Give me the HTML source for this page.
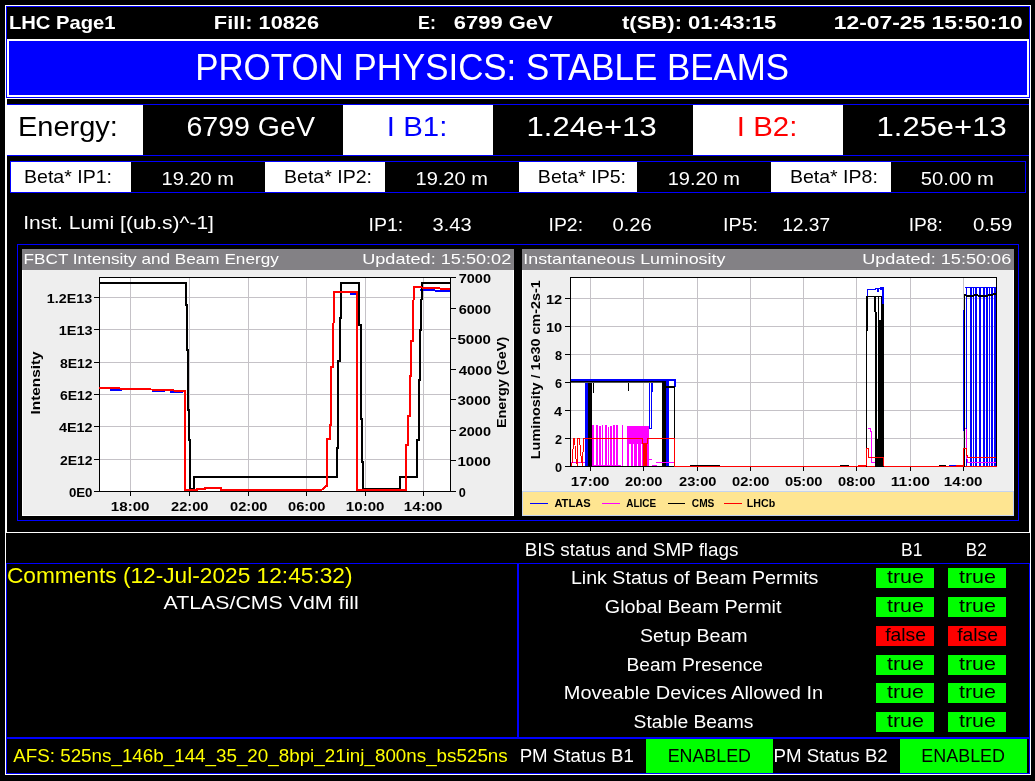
<!DOCTYPE html>
<html><head><meta charset="utf-8"><title>LHC Page1</title>
<style>html,body{margin:0;padding:0;background:#000;overflow:hidden}svg{display:block;will-change:transform}text{font-family:"Liberation Sans",sans-serif}</style>
</head><body>
<svg width="1035" height="781" viewBox="0 0 1035 781">
<rect x="0" y="0" width="1035" height="781" fill="#000"/>
<g shape-rendering="crispEdges">
<rect x="5" y="5" width="1026" height="1" fill="#ffffff"/>
<rect x="5" y="774" width="1026" height="1" fill="#ffffff"/>
<rect x="5" y="5" width="1" height="770" fill="#ffffff"/>
<rect x="1030" y="5" width="1" height="770" fill="#ffffff"/>
<rect x="6" y="6" width="1024" height="1" fill="#0000ff"/>
<rect x="6" y="97" width="1024" height="1" fill="#0000ff"/>
<rect x="6" y="6" width="1" height="92" fill="#0000ff"/>
<rect x="1029" y="6" width="1" height="92" fill="#0000ff"/>
<rect x="5" y="98" width="1026" height="1" fill="#ffffff"/>
<rect x="7" y="39" width="1022" height="58" fill="#ffffff"/>
<rect x="9" y="41" width="1018" height="54" fill="#0000ff"/>
<rect x="6" y="98" width="1" height="435" fill="#ffffff"/>
<rect x="1029" y="98" width="1" height="435" fill="#ffffff"/>
<rect x="7" y="104" width="1022" height="1" fill="#0000ff"/>
<rect x="7" y="155" width="1022" height="1" fill="#0000ff"/>
<rect x="7" y="105" width="136" height="50" fill="#ffffff"/>
<rect x="343" y="105" width="150" height="50" fill="#ffffff"/>
<rect x="693" y="105" width="150" height="50" fill="#ffffff"/>
<rect x="10" y="161" width="1016" height="1" fill="#0000ff"/>
<rect x="10" y="192" width="1016" height="1" fill="#0000ff"/>
<rect x="10" y="161" width="1" height="32" fill="#0000ff"/>
<rect x="1025" y="161" width="1" height="32" fill="#0000ff"/>
<rect x="11" y="162" width="120" height="30" fill="#ffffff"/>
<rect x="265" y="162" width="120" height="30" fill="#ffffff"/>
<rect x="519" y="162" width="118" height="30" fill="#ffffff"/>
<rect x="771" y="162" width="120" height="30" fill="#ffffff"/>
<rect x="17" y="244" width="1002" height="1" fill="#0000ff"/>
<rect x="17" y="520" width="1002" height="1" fill="#0000ff"/>
<rect x="17" y="244" width="1" height="277" fill="#0000ff"/>
<rect x="1018" y="244" width="1" height="277" fill="#0000ff"/>
<rect x="22" y="249" width="492" height="21" fill="#838185"/>
<rect x="22" y="270" width="492" height="246" fill="#ffffff"/>
<rect x="23" y="270" width="490" height="245" fill="#eeeeee"/>
<rect x="522" y="249" width="492" height="21" fill="#838185"/>
<rect x="522" y="270" width="492" height="221" fill="#ffffff"/>
<rect x="523" y="270" width="490" height="221" fill="#eeeeee"/>
<rect x="522" y="491" width="492" height="25" fill="#c4d3ee"/>
<rect x="523" y="492" width="490" height="23" fill="#fee591"/>
<rect x="5" y="532" width="1026" height="1" fill="#ffffff"/>
<rect x="6" y="563" width="1024" height="1" fill="#0000ff"/>
<rect x="6" y="563" width="1" height="211" fill="#0000ff"/>
<rect x="1029" y="563" width="1" height="211" fill="#0000ff"/>
<rect x="6" y="773" width="1024" height="1" fill="#0000ff"/>
<rect x="517" y="563" width="2" height="175" fill="#0000ff"/>
<rect x="6" y="737" width="1024" height="2" fill="#0000ff"/>
<rect x="876" y="568" width="58" height="20" fill="#00ff00"/>
<rect x="948" y="568" width="58" height="20" fill="#00ff00"/>
<rect x="876" y="597" width="58" height="20" fill="#00ff00"/>
<rect x="948" y="597" width="58" height="20" fill="#00ff00"/>
<rect x="876" y="626" width="58" height="20" fill="#ff0000"/>
<rect x="948" y="626" width="58" height="20" fill="#ff0000"/>
<rect x="876" y="655" width="58" height="20" fill="#00ff00"/>
<rect x="948" y="655" width="58" height="20" fill="#00ff00"/>
<rect x="876" y="683" width="58" height="20" fill="#00ff00"/>
<rect x="948" y="683" width="58" height="20" fill="#00ff00"/>
<rect x="876" y="712" width="58" height="20" fill="#00ff00"/>
<rect x="948" y="712" width="58" height="20" fill="#00ff00"/>
<rect x="646" y="739" width="127" height="34" fill="#00ff00"/>
<rect x="900" y="739" width="127" height="34" fill="#00ff00"/>
<rect x="99" y="277" width="352" height="215" fill="#ffffff"/>
<rect x="130" y="278" width="1" height="213" fill="#c5c2c7"/>
<rect x="189" y="278" width="1" height="213" fill="#c5c2c7"/>
<rect x="248" y="278" width="1" height="213" fill="#c5c2c7"/>
<rect x="306" y="278" width="1" height="213" fill="#c5c2c7"/>
<rect x="365" y="278" width="1" height="213" fill="#c5c2c7"/>
<rect x="423" y="278" width="1" height="213" fill="#c5c2c7"/>
<rect x="100" y="297" width="350" height="1" fill="#c5c2c7"/>
<rect x="100" y="329" width="350" height="1" fill="#c5c2c7"/>
<rect x="100" y="362" width="350" height="1" fill="#c5c2c7"/>
<rect x="100" y="394" width="350" height="1" fill="#c5c2c7"/>
<rect x="100" y="426" width="350" height="1" fill="#c5c2c7"/>
<rect x="100" y="459" width="350" height="1" fill="#c5c2c7"/>
<rect x="99" y="277" width="352" height="1" fill="#000"/>
<rect x="99" y="277" width="1" height="215" fill="#000"/>
<rect x="99" y="491" width="352" height="1" fill="#000"/>
<rect x="450" y="277" width="1" height="215" fill="#000"/>
<rect x="94" y="491" width="5" height="1" fill="#000"/>
<rect x="94" y="459" width="5" height="1" fill="#000"/>
<rect x="94" y="426" width="5" height="1" fill="#000"/>
<rect x="94" y="394" width="5" height="1" fill="#000"/>
<rect x="94" y="362" width="5" height="1" fill="#000"/>
<rect x="94" y="329" width="5" height="1" fill="#000"/>
<rect x="94" y="297" width="5" height="1" fill="#000"/>
<rect x="451" y="491" width="5" height="1" fill="#000"/>
<rect x="451" y="460" width="5" height="1" fill="#000"/>
<rect x="451" y="430" width="5" height="1" fill="#000"/>
<rect x="451" y="399" width="5" height="1" fill="#000"/>
<rect x="451" y="369" width="5" height="1" fill="#000"/>
<rect x="451" y="338" width="5" height="1" fill="#000"/>
<rect x="451" y="308" width="5" height="1" fill="#000"/>
<rect x="451" y="277" width="5" height="1" fill="#000"/>
<rect x="130" y="492" width="1" height="4" fill="#000"/>
<rect x="189" y="492" width="1" height="4" fill="#000"/>
<rect x="248" y="492" width="1" height="4" fill="#000"/>
<rect x="306" y="492" width="1" height="4" fill="#000"/>
<rect x="365" y="492" width="1" height="4" fill="#000"/>
<rect x="423" y="492" width="1" height="4" fill="#000"/>
<polyline points="110,390 122,390" fill="none" stroke="#0000ff" stroke-width="2"/>
<polyline points="152,391 165,391" fill="none" stroke="#0000ff" stroke-width="2"/>
<polyline points="170,392 183,392" fill="none" stroke="#0000ff" stroke-width="2"/>
<polyline points="420,290 450,291" fill="none" stroke="#0000ff" stroke-width="2"/>
<polyline points="350,294 356,294" fill="none" stroke="#0000ff" stroke-width="2"/>
<polyline points="99,283 186,283 186,305 187,305 187,350 188,350 188,410 189,410 189,440 190,440 190,489 194,489 194,477 337,477 337,448 338,448 338,361 340,361 340,318 341,318 341,283 359,283 359,325 360.5,325 360.5,419 362,419 362,462 363,462 363,489 400,489 400,477 417,477 417,440 418.5,440 418.5,380 419.5,380 419.5,330 420.5,330 420.5,300 421.5,300 422,283 450,283" fill="none" stroke="#000" stroke-width="2"/>
<polyline points="99,388 140,389 185,391 185,490 197,490 197,489 205,489 205,488 221,488 221,490 321,490 323,489 326,486 327,486 327,439 329.5,439 329.5,425 330.5,425 330.5,367 332.5,367 332.5,324 333.5,324 334,292 357,292 357,490 406,490 406.5,445 408,445 408,416 409.5,416 409.5,376 411,376 411,341 412.5,341 412.5,301 413.5,301 414,287 430,288 450,289" fill="none" stroke="#ff0000" stroke-width="2"/>
<rect x="570" y="277" width="427" height="190" fill="#ffffff"/>
<rect x="590" y="278" width="1" height="188" fill="#c5c2c7"/>
<rect x="643" y="278" width="1" height="188" fill="#c5c2c7"/>
<rect x="697" y="278" width="1" height="188" fill="#c5c2c7"/>
<rect x="750" y="278" width="1" height="188" fill="#c5c2c7"/>
<rect x="803" y="278" width="1" height="188" fill="#c5c2c7"/>
<rect x="856" y="278" width="1" height="188" fill="#c5c2c7"/>
<rect x="910" y="278" width="1" height="188" fill="#c5c2c7"/>
<rect x="963" y="278" width="1" height="188" fill="#c5c2c7"/>
<rect x="571" y="298" width="425" height="1" fill="#c5c2c7"/>
<rect x="571" y="326" width="425" height="1" fill="#c5c2c7"/>
<rect x="571" y="354" width="425" height="1" fill="#c5c2c7"/>
<rect x="571" y="382" width="425" height="1" fill="#c5c2c7"/>
<rect x="571" y="410" width="425" height="1" fill="#c5c2c7"/>
<rect x="571" y="438" width="425" height="1" fill="#c5c2c7"/>
<rect x="570" y="277" width="427" height="1" fill="#000"/>
<rect x="570" y="277" width="1" height="190" fill="#000"/>
<rect x="570" y="466" width="427" height="1" fill="#000"/>
<rect x="996" y="277" width="1" height="190" fill="#000"/>
<rect x="565" y="466" width="5" height="1" fill="#000"/>
<rect x="565" y="438" width="5" height="1" fill="#000"/>
<rect x="565" y="410" width="5" height="1" fill="#000"/>
<rect x="565" y="382" width="5" height="1" fill="#000"/>
<rect x="565" y="354" width="5" height="1" fill="#000"/>
<rect x="565" y="326" width="5" height="1" fill="#000"/>
<rect x="565" y="298" width="5" height="1" fill="#000"/>
<rect x="590" y="467" width="1" height="4" fill="#000"/>
<rect x="643" y="467" width="1" height="4" fill="#000"/>
<rect x="697" y="467" width="1" height="4" fill="#000"/>
<rect x="750" y="467" width="1" height="4" fill="#000"/>
<rect x="803" y="467" width="1" height="4" fill="#000"/>
<rect x="856" y="467" width="1" height="4" fill="#000"/>
<rect x="910" y="467" width="1" height="4" fill="#000"/>
<rect x="963" y="467" width="1" height="4" fill="#000"/>
<rect x="571" y="379" width="91" height="2" fill="#0000ff"/>
<rect x="585" y="381" width="3" height="85" fill="#0000ff"/>
<rect x="649" y="381" width="1" height="48" fill="#0000ff"/>
<rect x="649" y="428" width="3" height="1" fill="#0000ff"/>
<rect x="651" y="381" width="1" height="48" fill="#0000ff"/>
<rect x="651" y="381" width="2" height="11" fill="#0000ff"/>
<rect x="662" y="379" width="14" height="2" fill="#0000ff"/>
<rect x="666" y="381" width="10" height="5" fill="#0000ff"/>
<rect x="669" y="381" width="5" height="5" fill="#ffffff"/>
<rect x="666" y="386" width="3" height="80" fill="#0000ff"/>
<rect x="675" y="381" width="1" height="6" fill="#0000ff"/>
<rect x="571" y="381" width="91" height="1" fill="#000"/>
<rect x="571" y="382" width="91" height="1" fill="#555"/>
<rect x="588" y="383" width="4" height="83" fill="#000"/>
<rect x="593" y="383" width="1" height="10" fill="#000"/>
<rect x="628" y="383" width="1" height="8" fill="#000"/>
<rect x="662" y="381" width="4" height="85" fill="#000"/>
<rect x="666" y="386" width="9" height="2" fill="#000"/>
<rect x="674" y="388" width="1" height="78" fill="#000"/>
<rect x="571" y="462" width="14" height="1" fill="#ff00ff"/>
<rect x="592" y="425" width="2" height="41" fill="#ff00ff"/>
<rect x="596" y="425" width="2" height="41" fill="#ff00ff"/>
<rect x="599" y="426" width="2" height="40" fill="#ff00ff"/>
<rect x="602" y="425" width="1" height="41" fill="#ff00ff"/>
<rect x="605" y="425" width="2" height="41" fill="#ff00ff"/>
<rect x="608" y="427" width="1" height="39" fill="#ff00ff"/>
<rect x="610" y="426" width="2" height="40" fill="#ff00ff"/>
<rect x="613" y="425" width="2" height="41" fill="#ff00ff"/>
<rect x="616" y="425" width="2" height="41" fill="#ff00ff"/>
<rect x="622" y="425" width="1" height="41" fill="#ff00ff"/>
<rect x="592" y="465" width="29" height="1" fill="#ff00ff"/>
<rect x="627" y="426" width="22" height="18" fill="#ff00ff"/>
<rect x="627" y="444" width="2" height="22" fill="#ff00ff"/>
<rect x="631" y="444" width="2" height="22" fill="#ff00ff"/>
<rect x="634" y="444" width="3" height="22" fill="#ff00ff"/>
<rect x="638" y="444" width="3" height="22" fill="#ff00ff"/>
<rect x="642" y="444" width="1" height="22" fill="#ff00ff"/>
<rect x="646" y="444" width="3" height="22" fill="#ff00ff"/>
<rect x="649" y="459" width="3" height="1" fill="#ff00ff"/>
<rect x="652" y="465" width="5" height="1" fill="#ff00ff"/>
<rect x="656" y="462" width="18" height="1" fill="#ff00ff"/>
<polyline points="571.5,466 572.5,460 573.5,438.5 574.5,438.5 576,459 577.5,466 577.5,438.5 579.5,438.5 580.5,452 581.5,460 582.5,466 583.5,438.5" fill="none" stroke="#ff0000" stroke-width="1"/>
<rect x="584" y="438" width="59" height="1" fill="#ff0000"/>
<rect x="643" y="443" width="4" height="23" fill="#ff0000"/>
<rect x="642" y="438" width="1" height="6" fill="#ff0000"/>
<rect x="647" y="438" width="1" height="6" fill="#ff0000"/>
<rect x="647" y="438" width="28" height="1" fill="#ff0000"/>
<rect x="674" y="438" width="1" height="29" fill="#ff0000"/>
<rect x="675" y="466" width="322" height="1" fill="#ff0000"/>
<rect x="690" y="465" width="30" height="1" fill="#000"/>
<rect x="840" y="465" width="9" height="1" fill="#000"/>
<rect x="939" y="465" width="7" height="1" fill="#000"/>
<rect x="949" y="465" width="7" height="1" fill="#0000ff"/>
<rect x="858" y="465" width="9" height="1" fill="#ff0000"/>
<rect x="956" y="465" width="8" height="1" fill="#ff0000"/>
<rect x="866" y="296" width="2" height="35" fill="#000"/>
<rect x="866" y="331" width="1" height="136" fill="#000"/>
<rect x="866" y="296" width="18" height="1" fill="#000"/>
<rect x="874" y="296" width="2" height="16" fill="#000"/>
<rect x="875" y="312" width="2" height="155" fill="#000"/>
<rect x="878" y="296" width="1" height="171" fill="#000"/>
<rect x="879" y="320" width="4" height="147" fill="#000"/>
<rect x="881" y="296" width="2" height="25" fill="#000"/>
<rect x="883" y="296" width="1" height="171" fill="#000"/>
<rect x="877" y="439" width="1" height="28" fill="#000"/>
<rect x="867" y="289" width="1" height="7" fill="#0000ff"/>
<rect x="867" y="289" width="9" height="1" fill="#0000ff"/>
<rect x="875" y="288" width="6" height="1" fill="#0000ff"/>
<rect x="877" y="289" width="2" height="3" fill="#0000ff"/>
<rect x="880" y="287" width="2" height="3" fill="#0000ff"/>
<rect x="882" y="287" width="2" height="17" fill="#0000ff"/>
<polyline points="867.5,428.5 870.5,428.5 870.5,431.5 871.5,431.5 871.5,462.5 875,462.5" fill="none" stroke="#ff00ff" stroke-width="1"/>
<polyline points="866.5,466 866.5,448.5 868.5,448.5 868.5,457.5 883.5,457.5 883.5,466" fill="none" stroke="#ff0000" stroke-width="1"/>
<rect x="964" y="295" width="1" height="172" fill="#000"/>
<rect x="963" y="310" width="1" height="121" fill="#0000ff"/>
<rect x="965" y="287" width="31" height="1" fill="#0000ff"/>
<rect x="966" y="287" width="1" height="179" fill="#0000ff"/>
<rect x="970" y="287" width="2" height="179" fill="#0000ff"/>
<rect x="973" y="287" width="1" height="179" fill="#0000ff"/>
<rect x="975" y="287" width="2" height="179" fill="#0000ff"/>
<rect x="979" y="287" width="2" height="179" fill="#0000ff"/>
<rect x="983" y="287" width="2" height="179" fill="#0000ff"/>
<rect x="986" y="287" width="2" height="179" fill="#0000ff"/>
<rect x="989" y="287" width="1" height="179" fill="#0000ff"/>
<rect x="991" y="287" width="2" height="179" fill="#0000ff"/>
<rect x="994" y="287" width="2" height="179" fill="#0000ff"/>
<polyline points="964,295 968,296 972,296 976,295 980,296 986,296 990,295 996,294" fill="none" stroke="#000" stroke-width="2"/>
<polyline points="964.5,428.5 966,428.5 966.5,455 967.5,462.5 996,462.5" fill="none" stroke="#ff00ff" stroke-width="1"/>
<polyline points="963.5,466 963.5,448.5 966.5,448.5 967,455.5 968,457.5 996,457.5" fill="none" stroke="#ff0000" stroke-width="1"/>
<rect x="530" y="503" width="18" height="1" fill="#0000ff"/>
<rect x="602" y="503" width="18" height="1" fill="#ff00ff"/>
<rect x="668" y="503" width="17" height="1" fill="#000"/>
<rect x="724" y="503" width="18" height="1" fill="#ff0000"/>
</g>
<g>
<text x="8.94" y="29" font-weight="bold" font-size="19.04" fill="#fff" textLength="106.57" lengthAdjust="spacingAndGlyphs">LHC Page1</text>
<text x="213.86" y="29" font-weight="bold" font-size="19.04" fill="#fff" textLength="105.20" lengthAdjust="spacingAndGlyphs">Fill: 10826</text>
<text x="418.06" y="29" font-weight="bold" font-size="19.04" fill="#fff" textLength="17.84" lengthAdjust="spacingAndGlyphs">E:</text>
<text x="453.85" y="29" font-weight="bold" font-size="19.04" fill="#fff" textLength="98.83" lengthAdjust="spacingAndGlyphs">6799 GeV</text>
<text x="622.00" y="29" font-weight="bold" font-size="19.04" fill="#fff" textLength="154.31" lengthAdjust="spacingAndGlyphs">t(SB): 01:43:15</text>
<text x="833.80" y="29" font-weight="bold" font-size="19.04" fill="#fff" textLength="188.99" lengthAdjust="spacingAndGlyphs">12-07-25 15:50:10</text>
<text x="195.17" y="80" font-weight="normal" font-size="37.03" fill="#fff" textLength="593.89" lengthAdjust="spacingAndGlyphs">PROTON PHYSICS: STABLE BEAMS</text>
<text x="17.95" y="136" font-weight="normal" font-size="28.25" fill="#000" textLength="99.93" lengthAdjust="spacingAndGlyphs">Energy:</text>
<text x="186.49" y="136" font-weight="normal" font-size="28.25" fill="#fff" textLength="128.47" lengthAdjust="spacingAndGlyphs">6799 GeV</text>
<text x="386.88" y="136" font-weight="normal" font-size="28.25" fill="#00f" textLength="60.49" lengthAdjust="spacingAndGlyphs">I B1:</text>
<text x="526.61" y="136" font-weight="normal" font-size="28.25" fill="#fff" textLength="130.01" lengthAdjust="spacingAndGlyphs">1.24e+13</text>
<text x="736.88" y="136" font-weight="normal" font-size="28.25" fill="#f00" textLength="60.49" lengthAdjust="spacingAndGlyphs">I B2:</text>
<text x="876.61" y="136" font-weight="normal" font-size="28.25" fill="#fff" textLength="130.01" lengthAdjust="spacingAndGlyphs">1.25e+13</text>
<text x="23.97" y="183.2" font-weight="normal" font-size="19.04" fill="#000" textLength="88.08" lengthAdjust="spacingAndGlyphs">Beta* IP1:</text>
<text x="161.55" y="185" font-weight="normal" font-size="19.04" fill="#fff" textLength="72.36" lengthAdjust="spacingAndGlyphs">19.20 m</text>
<text x="283.97" y="183.2" font-weight="normal" font-size="19.04" fill="#000" textLength="88.08" lengthAdjust="spacingAndGlyphs">Beta* IP2:</text>
<text x="415.55" y="185" font-weight="normal" font-size="19.04" fill="#fff" textLength="72.26" lengthAdjust="spacingAndGlyphs">19.20 m</text>
<text x="537.87" y="183.2" font-weight="normal" font-size="19.04" fill="#000" textLength="88.18" lengthAdjust="spacingAndGlyphs">Beta* IP5:</text>
<text x="667.65" y="185" font-weight="normal" font-size="19.04" fill="#fff" textLength="72.26" lengthAdjust="spacingAndGlyphs">19.20 m</text>
<text x="789.97" y="183.2" font-weight="normal" font-size="19.04" fill="#000" textLength="87.87" lengthAdjust="spacingAndGlyphs">Beta* IP8:</text>
<text x="920.84" y="185" font-weight="normal" font-size="19.04" fill="#fff" textLength="73.08" lengthAdjust="spacingAndGlyphs">50.00 m</text>
<text x="23.27" y="228.5" font-weight="normal" font-size="18.83" fill="#fff" textLength="190.68" lengthAdjust="spacingAndGlyphs">Inst. Lumi [(ub.s)^-1]</text>
<text x="368.53" y="230.8" font-weight="normal" font-size="18.83" fill="#fff" textLength="34.73" lengthAdjust="spacingAndGlyphs">IP1:</text>
<text x="432.64" y="230.8" font-weight="normal" font-size="18.83" fill="#fff" textLength="38.96" lengthAdjust="spacingAndGlyphs">3.43</text>
<text x="548.54" y="230.8" font-weight="normal" font-size="18.83" fill="#fff" textLength="34.50" lengthAdjust="spacingAndGlyphs">IP2:</text>
<text x="612.43" y="230.8" font-weight="normal" font-size="18.83" fill="#fff" textLength="39.27" lengthAdjust="spacingAndGlyphs">0.26</text>
<text x="723.11" y="230.8" font-weight="normal" font-size="18.83" fill="#fff" textLength="34.95" lengthAdjust="spacingAndGlyphs">IP5:</text>
<text x="782.18" y="230.8" font-weight="normal" font-size="18.83" fill="#fff" textLength="47.94" lengthAdjust="spacingAndGlyphs">12.37</text>
<text x="908.66" y="230.8" font-weight="normal" font-size="18.83" fill="#fff" textLength="34.17" lengthAdjust="spacingAndGlyphs">IP8:</text>
<text x="972.92" y="230.8" font-weight="normal" font-size="18.83" fill="#fff" textLength="39.48" lengthAdjust="spacingAndGlyphs">0.59</text>
<text x="23.59" y="264" font-weight="normal" font-size="14.20" fill="#fff" textLength="255.20" lengthAdjust="spacingAndGlyphs">FBCT Intensity and Beam Energy</text>
<text x="362.22" y="264" font-weight="normal" font-size="14.20" fill="#fff" textLength="149.03" lengthAdjust="spacingAndGlyphs">Updated: 15:50:02</text>
<text x="523.34" y="264" font-weight="normal" font-size="14.20" fill="#fff" textLength="202.04" lengthAdjust="spacingAndGlyphs">Instantaneous Luminosity</text>
<text x="862.22" y="264" font-weight="normal" font-size="14.20" fill="#fff" textLength="149.03" lengthAdjust="spacingAndGlyphs">Updated: 15:50:06</text>
<text x="524.68" y="555.9" font-weight="normal" font-size="18.52" fill="#fff" textLength="213.87" lengthAdjust="spacingAndGlyphs">BIS status and SMP flags</text>
<text x="901.06" y="555.8" font-weight="normal" font-size="18.52" fill="#fff" textLength="21.35" lengthAdjust="spacingAndGlyphs">B1</text>
<text x="965.77" y="555.8" font-weight="normal" font-size="18.52" fill="#fff" textLength="21.02" lengthAdjust="spacingAndGlyphs">B2</text>
<text x="570.94" y="583.8" font-weight="normal" font-size="18.52" fill="#fff" textLength="247.49" lengthAdjust="spacingAndGlyphs">Link Status of Beam Permits</text>
<text x="604.83" y="612.8" font-weight="normal" font-size="18.52" fill="#fff" textLength="176.68" lengthAdjust="spacingAndGlyphs">Global Beam Permit</text>
<text x="640.04" y="642" font-weight="normal" font-size="18.52" fill="#fff" textLength="107.63" lengthAdjust="spacingAndGlyphs">Setup Beam</text>
<text x="626.46" y="670.9" font-weight="normal" font-size="18.52" fill="#fff" textLength="136.59" lengthAdjust="spacingAndGlyphs">Beam Presence</text>
<text x="563.82" y="698.8" font-weight="normal" font-size="18.52" fill="#fff" textLength="259.27" lengthAdjust="spacingAndGlyphs">Moveable Devices Allowed In</text>
<text x="633.56" y="727.5" font-weight="normal" font-size="18.52" fill="#fff" textLength="119.94" lengthAdjust="spacingAndGlyphs">Stable Beams</text>
<text x="6.94" y="582.7" font-weight="normal" font-size="21.37" fill="#ff0" textLength="345.56" lengthAdjust="spacingAndGlyphs">Comments (12-Jul-2025 12:45:32)</text>
<text x="163.50" y="609.3" font-weight="normal" font-size="19.04" fill="#fff" textLength="195.18" lengthAdjust="spacingAndGlyphs">ATLAS/CMS VdM fill</text>
<text x="13.20" y="761.7" font-weight="normal" font-size="18.41" fill="#ff0" textLength="494.52" lengthAdjust="spacingAndGlyphs">AFS: 525ns_146b_144_35_20_8bpi_21inj_800ns_bs525ns</text>
<text x="519.68" y="761.9" font-weight="normal" font-size="18.41" fill="#fff" textLength="114.16" lengthAdjust="spacingAndGlyphs">PM Status B1</text>
<text x="667.66" y="761.9" font-weight="normal" font-size="19.04" fill="#000" textLength="83.34" lengthAdjust="spacingAndGlyphs">ENABLED</text>
<text x="773.58" y="761.9" font-weight="normal" font-size="18.41" fill="#fff" textLength="114.16" lengthAdjust="spacingAndGlyphs">PM Status B2</text>
<text x="921.36" y="761.9" font-weight="normal" font-size="19.04" fill="#000" textLength="83.65" lengthAdjust="spacingAndGlyphs">ENABLED</text>
<text x="554.40" y="506.9" font-weight="bold" font-size="11.00" fill="#000" textLength="36.36" lengthAdjust="spacingAndGlyphs">ATLAS</text>
<text x="626.30" y="506.9" font-weight="bold" font-size="11.00" fill="#000" textLength="29.80" lengthAdjust="spacingAndGlyphs">ALICE</text>
<text x="691.80" y="506.9" font-weight="bold" font-size="11.00" fill="#000" textLength="22.62" lengthAdjust="spacingAndGlyphs">CMS</text>
<text x="746.83" y="506.9" font-weight="bold" font-size="11.00" fill="#000" textLength="28.39" lengthAdjust="spacingAndGlyphs">LHCb</text>
<text x="68.90" y="497" font-weight="bold" font-size="12.70" fill="#000" textLength="23.60" lengthAdjust="spacingAndGlyphs">0E0</text>
<text x="59.90" y="465" font-weight="bold" font-size="12.70" fill="#000" textLength="32.71" lengthAdjust="spacingAndGlyphs">2E12</text>
<text x="58.90" y="432" font-weight="bold" font-size="12.70" fill="#000" textLength="33.73" lengthAdjust="spacingAndGlyphs">4E12</text>
<text x="59.90" y="400" font-weight="bold" font-size="12.70" fill="#000" textLength="32.71" lengthAdjust="spacingAndGlyphs">6E12</text>
<text x="59.90" y="368" font-weight="bold" font-size="12.70" fill="#000" textLength="32.71" lengthAdjust="spacingAndGlyphs">8E12</text>
<text x="58.76" y="335" font-weight="bold" font-size="12.70" fill="#000" textLength="33.88" lengthAdjust="spacingAndGlyphs">1E13</text>
<text x="46.77" y="303" font-weight="bold" font-size="12.70" fill="#000" textLength="45.38" lengthAdjust="spacingAndGlyphs">1.2E13</text>
<text x="458.70" y="497" font-weight="bold" font-size="12.70" fill="#000" textLength="7.06" lengthAdjust="spacingAndGlyphs">0</text>
<text x="457.51" y="466" font-weight="bold" font-size="12.70" fill="#000" textLength="33.46" lengthAdjust="spacingAndGlyphs">1000</text>
<text x="458.70" y="436" font-weight="bold" font-size="12.70" fill="#000" textLength="32.27" lengthAdjust="spacingAndGlyphs">2000</text>
<text x="457.51" y="405" font-weight="bold" font-size="12.70" fill="#000" textLength="33.46" lengthAdjust="spacingAndGlyphs">3000</text>
<text x="458.70" y="375" font-weight="bold" font-size="12.70" fill="#000" textLength="33.28" lengthAdjust="spacingAndGlyphs">4000</text>
<text x="457.51" y="344" font-weight="bold" font-size="12.70" fill="#000" textLength="33.46" lengthAdjust="spacingAndGlyphs">5000</text>
<text x="458.70" y="314" font-weight="bold" font-size="12.70" fill="#000" textLength="32.27" lengthAdjust="spacingAndGlyphs">6000</text>
<text x="458.70" y="283" font-weight="bold" font-size="12.70" fill="#000" textLength="32.27" lengthAdjust="spacingAndGlyphs">7000</text>
<text x="110.81" y="510.8" font-weight="bold" font-size="12.70" fill="#000" textLength="38.73" lengthAdjust="spacingAndGlyphs">18:00</text>
<text x="171.00" y="510.8" font-weight="bold" font-size="12.70" fill="#000" textLength="37.52" lengthAdjust="spacingAndGlyphs">22:00</text>
<text x="230.00" y="510.8" font-weight="bold" font-size="12.70" fill="#000" textLength="37.52" lengthAdjust="spacingAndGlyphs">02:00</text>
<text x="288.00" y="510.8" font-weight="bold" font-size="12.70" fill="#000" textLength="37.52" lengthAdjust="spacingAndGlyphs">06:00</text>
<text x="345.81" y="510.8" font-weight="bold" font-size="12.70" fill="#000" textLength="38.73" lengthAdjust="spacingAndGlyphs">10:00</text>
<text x="403.81" y="510.8" font-weight="bold" font-size="12.70" fill="#000" textLength="38.73" lengthAdjust="spacingAndGlyphs">14:00</text>
<text x="555.10" y="472" font-weight="bold" font-size="12.70" fill="#000" textLength="7.06" lengthAdjust="spacingAndGlyphs">0</text>
<text x="555.10" y="444" font-weight="bold" font-size="12.70" fill="#000" textLength="7.06" lengthAdjust="spacingAndGlyphs">2</text>
<text x="554.10" y="416" font-weight="bold" font-size="12.70" fill="#000" textLength="8.07" lengthAdjust="spacingAndGlyphs">4</text>
<text x="555.10" y="388" font-weight="bold" font-size="12.70" fill="#000" textLength="7.06" lengthAdjust="spacingAndGlyphs">6</text>
<text x="555.10" y="360" font-weight="bold" font-size="12.70" fill="#000" textLength="7.06" lengthAdjust="spacingAndGlyphs">8</text>
<text x="545.95" y="332" font-weight="bold" font-size="12.70" fill="#000" textLength="16.30" lengthAdjust="spacingAndGlyphs">10</text>
<text x="545.95" y="304" font-weight="bold" font-size="12.70" fill="#000" textLength="16.30" lengthAdjust="spacingAndGlyphs">12</text>
<text x="570.81" y="486" font-weight="bold" font-size="12.70" fill="#000" textLength="38.73" lengthAdjust="spacingAndGlyphs">17:00</text>
<text x="625.00" y="486" font-weight="bold" font-size="12.70" fill="#000" textLength="37.52" lengthAdjust="spacingAndGlyphs">20:00</text>
<text x="679.00" y="486" font-weight="bold" font-size="12.70" fill="#000" textLength="37.52" lengthAdjust="spacingAndGlyphs">23:00</text>
<text x="732.00" y="486" font-weight="bold" font-size="12.70" fill="#000" textLength="37.52" lengthAdjust="spacingAndGlyphs">02:00</text>
<text x="785.00" y="486" font-weight="bold" font-size="12.70" fill="#000" textLength="37.52" lengthAdjust="spacingAndGlyphs">05:00</text>
<text x="838.00" y="486" font-weight="bold" font-size="12.70" fill="#000" textLength="37.52" lengthAdjust="spacingAndGlyphs">08:00</text>
<text x="890.77" y="486" font-weight="bold" font-size="12.70" fill="#000" textLength="39.16" lengthAdjust="spacingAndGlyphs">11:00</text>
<text x="943.81" y="486" font-weight="bold" font-size="12.70" fill="#000" textLength="38.73" lengthAdjust="spacingAndGlyphs">14:00</text>
<text x="886.95" y="583.3" font-weight="normal" font-size="19.04" fill="#000" textLength="37.00" lengthAdjust="spacingAndGlyphs">true</text>
<text x="958.95" y="583.3" font-weight="normal" font-size="19.04" fill="#000" textLength="37.00" lengthAdjust="spacingAndGlyphs">true</text>
<text x="886.95" y="612.3" font-weight="normal" font-size="19.04" fill="#000" textLength="37.00" lengthAdjust="spacingAndGlyphs">true</text>
<text x="958.95" y="612.3" font-weight="normal" font-size="19.04" fill="#000" textLength="37.00" lengthAdjust="spacingAndGlyphs">true</text>
<text x="885.20" y="641.3" font-weight="normal" font-size="19.04" fill="#000" textLength="40.82" lengthAdjust="spacingAndGlyphs">false</text>
<text x="957.20" y="641.3" font-weight="normal" font-size="19.04" fill="#000" textLength="40.82" lengthAdjust="spacingAndGlyphs">false</text>
<text x="886.95" y="670.3" font-weight="normal" font-size="19.04" fill="#000" textLength="37.00" lengthAdjust="spacingAndGlyphs">true</text>
<text x="958.95" y="670.3" font-weight="normal" font-size="19.04" fill="#000" textLength="37.00" lengthAdjust="spacingAndGlyphs">true</text>
<text x="886.95" y="698.3" font-weight="normal" font-size="19.04" fill="#000" textLength="37.00" lengthAdjust="spacingAndGlyphs">true</text>
<text x="958.95" y="698.3" font-weight="normal" font-size="19.04" fill="#000" textLength="37.00" lengthAdjust="spacingAndGlyphs">true</text>
<text x="886.95" y="727.3" font-weight="normal" font-size="19.04" fill="#000" textLength="37.00" lengthAdjust="spacingAndGlyphs">true</text>
<text x="958.95" y="727.3" font-weight="normal" font-size="19.04" fill="#000" textLength="37.00" lengthAdjust="spacingAndGlyphs">true</text>
<text transform="translate(40.4,414.46) rotate(-90)" x="0" y="0" font-weight="bold" font-size="13.23" fill="#000" textLength="63.08" lengthAdjust="spacingAndGlyphs">Intensity</text>
<text transform="translate(506.3,428.07) rotate(-90)" x="0" y="0" font-weight="bold" font-size="13.54" fill="#000" textLength="91.35" lengthAdjust="spacingAndGlyphs">Energy (GeV)</text>
<text transform="translate(540.3,459.16) rotate(-90)" x="0" y="0" font-weight="bold" font-size="13.54" fill="#000" textLength="178.86" lengthAdjust="spacingAndGlyphs">Luminosity / 1e30 cm-2s-1</text>
</g>
</svg>
</body></html>
